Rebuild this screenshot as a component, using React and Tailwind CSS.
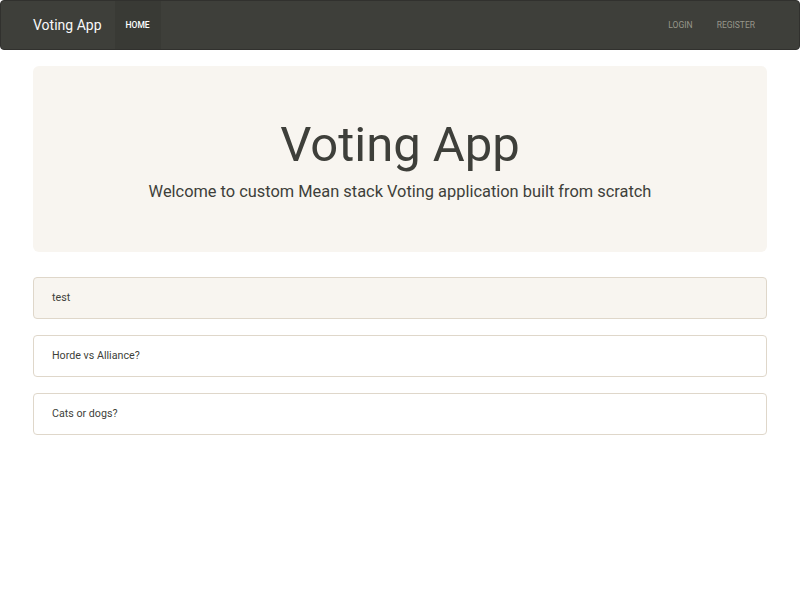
const polls = [
  { title: "test", active: true },
  { title: "Horde vs Alliance?" },
  { title: "Cats or dogs?" },
];

export default function App() {
  return (
    <div className="min-h-[600px] bg-white font-['Roboto',sans-serif] text-[#3e3f3a]">
      {/* NAVBAR */}
      <nav className="h-[50px] bg-[#3e3f3a] rounded-[4px] border border-[#31312e] flex items-stretch justify-between px-[32px]">
        <div className="flex items-stretch">
          <span className="flex items-center text-[14px] text-[#f8f8f8] pr-[13px]">Voting App</span>
          <span className="flex items-center pt-[1px] px-[11px] bg-[#393a35] text-[8.5px] font-medium uppercase text-white">
            Home
          </span>
        </div>
        <div className="flex items-stretch pt-[1px] text-[8.5px] uppercase text-[#98978b]">
          <span className="flex items-center px-[12px]">Login</span>
          <span className="flex items-center px-[12px]">Register</span>
        </div>
      </nav>

      <div className="px-[33px] pt-[16px]">
        {/* JUMBOTRON */}
        <div className="bg-[#f8f5f0] rounded-[6px] h-[186px] flex flex-col items-center pt-[50px]">
          <h1 className="text-[49px] leading-[58px] font-normal">Voting App</h1>
          <p className="text-[16.4px] mt-[6px]">
            Welcome to custom Mean stack Voting application built from scratch
          </p>
        </div>

        {/* POLLS */}
        <div className="mt-[25px] flex flex-col gap-[16px]">
          {polls.map((p) => (
            <div
              key={p.title}
              className={`h-[42px] border border-[#dfd7ca] rounded-[4px] flex items-center px-[18px] text-[10.7px] ${
                p.active ? "bg-[#f8f5f0]" : "bg-white"
              }`}
            >
              {p.title}
            </div>
          ))}
        </div>
      </div>
    </div>
  );
}
